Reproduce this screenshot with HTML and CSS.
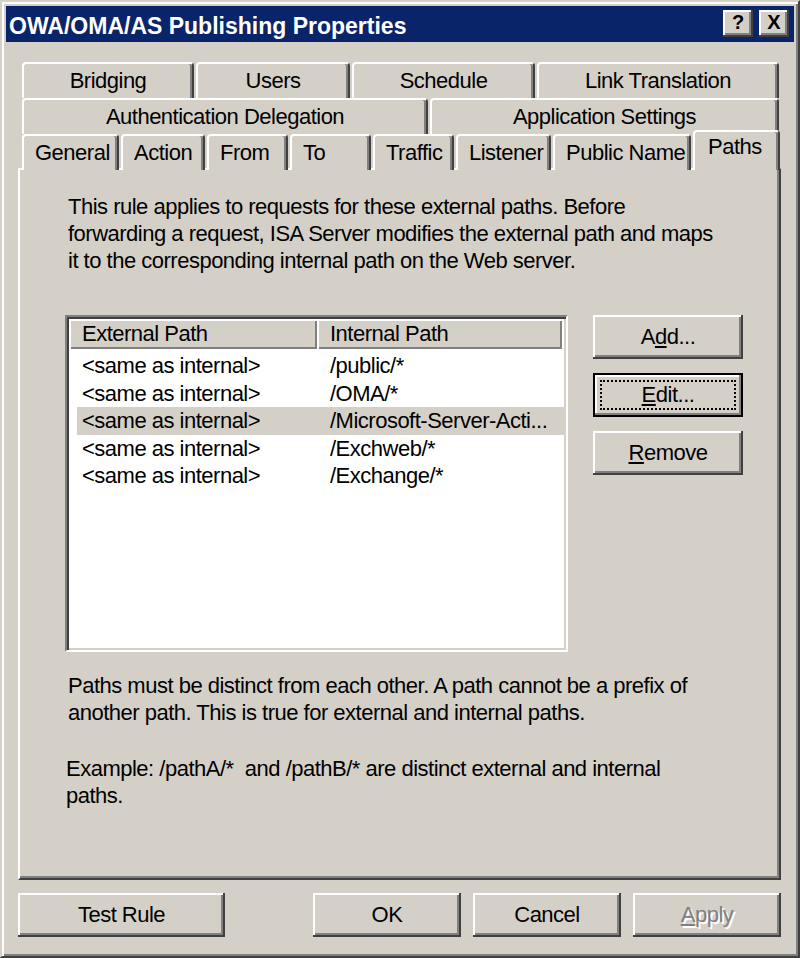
FILE: index.html
```html
<!DOCTYPE html>
<html lang="en">
  <head>
    <meta charset="UTF-8" />
    <title>OWA/OMA/AS Publishing Properties</title>
    <link rel="stylesheet" href="styles.css">
  </head>
  <body>
    <div class="window">
      <div class="titlebar">
        <span class="title">OWA/OMA/AS Publishing Properties</span>
        <div class="caption-btns">
          <span class="cap-btn">?</span>
          <span class="cap-btn">X</span>
        </div>
      </div>

      <div class="sheet">
        <div class="tab-row row-1">
          <div class="tab">Bridging</div>
          <div class="tab">Users</div>
          <div class="tab">Schedule</div>
          <div class="tab">Link Translation</div>
        </div>
        <div class="tab-row row-2">
          <div class="tab">Authentication Delegation</div>
          <div class="tab">Application Settings</div>
        </div>
        <div class="tab-row row-3">
          <div class="tab">General</div>
          <div class="tab">Action</div>
          <div class="tab">From</div>
          <div class="tab">To</div>
          <div class="tab">Traffic</div>
          <div class="tab">Listener</div>
          <div class="tab">Public Name</div>
          <div class="tab active">Paths</div>
        </div>

        <div class="panel">
          <p class="note intro">
            This rule applies to requests for these external paths. Before<br>
            forwarding a request, ISA Server modifies the external path and maps<br>
            it to the corresponding internal path on the Web server.
          </p>

          <div class="paths">
            <div class="listview">
              <div class="lv-header">
                <div class="lv-col">External Path</div>
                <div class="lv-col">Internal Path</div>
              </div>
              <div class="lv-body">
                <div class="lv-row"><span>&lt;same as internal&gt;</span><span>/public/*</span></div>
                <div class="lv-row"><span>&lt;same as internal&gt;</span><span>/OMA/*</span></div>
                <div class="lv-row selected"><span>&lt;same as internal&gt;</span><span>/Microsoft-Server-Acti...</span></div>
                <div class="lv-row"><span>&lt;same as internal&gt;</span><span>/Exchweb/*</span></div>
                <div class="lv-row"><span>&lt;same as internal&gt;</span><span>/Exchange/*</span></div>
              </div>
            </div>

            <div class="side-btns">
              <button class="btn">A<u>d</u>d...</button>
              <button class="btn default"><span class="focus"><u>E</u>dit...</span></button>
              <button class="btn"><u>R</u>emove</button>
            </div>
          </div>

          <p class="note rules">
            Paths must be distinct from each other. A path cannot be a prefix of<br>
            another path. This is true for external and internal paths.
          </p>
          <p class="note example">
            Example: /pathA/*&nbsp; and /pathB/* are distinct external and internal<br>
            paths.
          </p>
        </div>
      </div>

      <div class="footer">
        <button class="btn wide">Test Rule</button>
        <button class="btn">OK</button>
        <button class="btn">Cancel</button>
        <button class="btn disabled"><u>A</u>pply</button>
      </div>
    </div>
  </body>
</html>
```

FILE: styles.css
```css
body {
  margin: 0;
  background-color: #d4d0c8;
  font-family: "Liberation Sans", Arial, sans-serif;
  font-size: 22px;
  letter-spacing: -0.5px;
  color: #000;
}
.window {
  width: 800px;
  height: 958px;
  box-sizing: border-box;
  border: 2px solid;
  border-color: #d4d0c8 #404040 #404040 #d4d0c8;
  box-shadow: inset 2px 2px 0 #fff, inset -2px -2px 0 #808080;
  padding: 4px;
  background-color: #d4d0c8;
}
.titlebar {
  height: 36px;
  background-color: #0a246a;
  display: flex;
  justify-content: space-between;
  align-items: flex-start;
  padding: 0 5px 0 3px;
}
.title {
  font-weight: bold;
  font-size: 23px;
  letter-spacing: 0;
  line-height: 32px;
  padding-top: 4px;
  color: #fff;
  white-space: nowrap;
}
.caption-btns {
  display: flex;
  gap: 6px;
  margin-top: 4px;
}
.cap-btn {
  width: 30px;
  height: 27px;
  box-sizing: border-box;
  display: flex;
  align-items: center;
  justify-content: center;
  background-color: #d4d0c8;
  box-shadow: inset -2px -2px 0 #404040, inset 2px 2px 0 #fff, inset -4px -4px 0 #808080;
  font-weight: bold;
  font-size: 20px;
  letter-spacing: 0;
  padding-bottom: 2px;
}

/* tabs */
.sheet {
  margin: 20px 13px 0 12px;
}
.tab-row {
  display: grid;
  column-gap: 2px;
  padding-left: 4px;
  height: 36px;
}
.row-1 {
  grid-template-columns: 172px 154px 183px 242px;
}
.row-2 {
  grid-template-columns: 406px 349px;
}
.row-3 {
  grid-template-columns: 97px 84px 81px 81px 81px 95px 138px 87px;
  height: 34px;
}
.tab {
  box-sizing: border-box;
  height: 100%;
  border-top: 2px solid #fff;
  border-left: 2px solid #fff;
  border-right: 2px solid #404040;
  border-radius: 4px 4px 0 0;
  box-shadow: inset -2px 0 0 #808080;
  background-color: #d4d0c8;
  text-align: center;
  line-height: 22px;
  padding-top: 6px;
  white-space: nowrap;
}
.row-3 .tab {
  text-align: left;
  padding-left: 11px;
  padding-top: 6px;
}
.row-3 .tab.active {
  position: relative;
  z-index: 1;
  height: 40px;
  margin-top: -4px;
  padding-left: 13px;
  padding-top: 4px;
}

/* panel */
.panel {
  height: 712px;
  box-sizing: border-box;
  border: 2px solid;
  border-color: #fff #404040 #404040 #fff;
  box-shadow: inset -2px -2px 0 #808080;
  padding: 23px 0 0 45px;
}
.note {
  margin: 0 0 0 3px;
  line-height: 27px;
  white-space: nowrap;
}
.paths {
  display: flex;
  align-items: flex-start;
  margin-top: 41px;
}
.listview {
  width: 503px;
  height: 337px;
  box-sizing: border-box;
  border: 2px solid;
  border-color: #808080 #fff #fff #808080;
  box-shadow: inset 2px 2px 0 #404040, inset -2px -2px 0 #d4d0c8;
  padding: 2px;
  background-color: #fff;
}
.lv-header {
  display: grid;
  grid-template-columns: 248px 245px;
  height: 30px;
}
.lv-col {
  box-sizing: border-box;
  background-color: #d4d0c8;
  box-shadow: inset 2px 2px 0 #fff, inset -2px -2px 0 #808080;
  padding: 4px 0 0 13px;
  line-height: 22px;
  white-space: nowrap;
}
.lv-body {
  padding-top: 3px;
}
.lv-row {
  display: grid;
  grid-template-columns: 240px 246px;
  margin-left: 8px;
  height: 27.5px;
  line-height: 27.5px;
  white-space: nowrap;
}
.lv-row span:first-child {
  padding-left: 5px;
}
.lv-row span:last-child {
  padding-left: 13px;
}
.lv-row.selected {
  background-color: #d4d0c8;
}

/* buttons */
.btn {
  box-sizing: border-box;
  width: 148px;
  height: 44px;
  border: none;
  padding: 0;
  background-color: #d4d0c8;
  box-shadow: inset -2px -2px 0 #404040, inset 2px 2px 0 #fff, inset -4px -4px 0 #808080;
  font-family: inherit;
  font-size: 22px;
  letter-spacing: -0.5px;
  color: #000;
}
.side-btns {
  display: flex;
  flex-direction: column;
  gap: 14px;
  margin-left: 25px;
}
.side-btns .btn {
  width: 150px;
}
.btn.default {
  border: 2px solid #000;
  padding: 5px;
  box-shadow: inset -2px -2px 0 #808080, inset 2px 2px 0 #fff;
}
.focus {
  display: flex;
  align-items: center;
  justify-content: center;
  height: 100%;
  box-sizing: border-box;
  border: 2px dotted #000;
}
.btn.disabled {
  color: #808080;
  text-shadow: 2px 2px 0 #fff;
}
.rules {
  margin-top: 20px;
}
.example {
  margin-top: 29px;
  margin-left: 1px;
}
.footer {
  display: flex;
  gap: 12px;
  margin: 13px 0 0 12px;
}
.btn.wide {
  width: 207px;
  margin-right: 76px;
}
```
